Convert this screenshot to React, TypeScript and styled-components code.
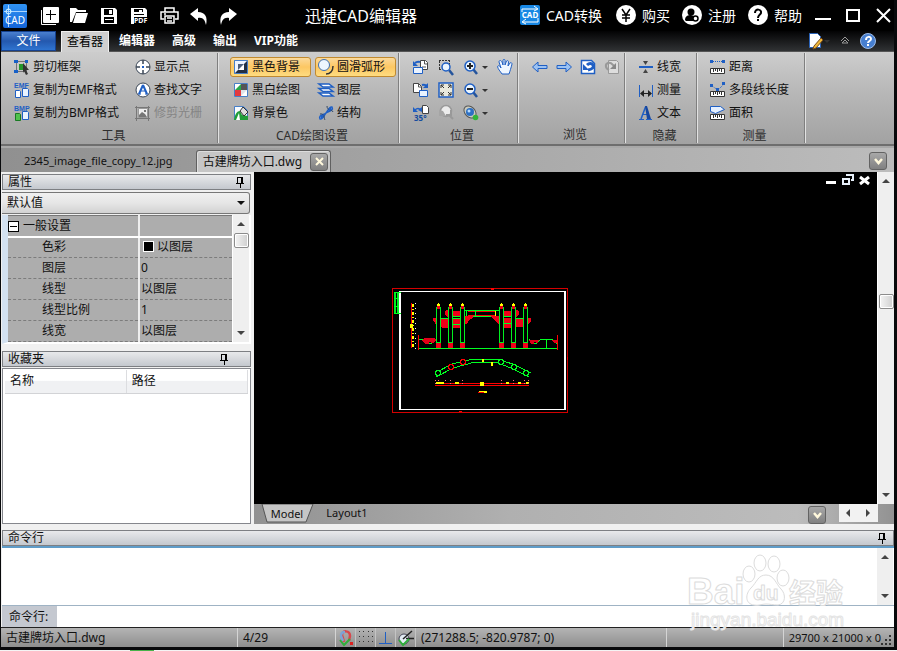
import React from "react";
import styled, { createGlobalStyle } from "styled-components";

const Global = createGlobalStyle`
  * { box-sizing: border-box; }
  body { margin: 0; background: #000; }
  body, button, input, select, textarea, table {
    font-family: "Noto Sans", "Noto Sans CJK SC", sans-serif;
    font-size: 12px;
    line-height: 16px;
    color: #111;
  }
  button { border: 0; padding: 0; background: none; }
`;

/* ---------- icons ---------- */

const B = "#1f5fc4";
const icons: Record<string, React.ReactNode> = {
  cut: (
    <g>
      <path d="M2.500 2.500h10v10h-10z" fill="none" stroke="#222" strokeDasharray="1 1" />
      <path d="M0 1h4v3H0zM11 1h3v3h-3zM0 11h4v3H0z" fill="#1760c8" />
      <path d="M5 5h4v6H5z" fill="#26962c" />
      <path d="M9 4l6 7h-3l2 4-2 1-2-4-1 2z" fill="#333" />
    </g>
  ),
  emf: <Copy label="EMF" color={B} fill="#fff" />,
  bmp: <Copy label="BMP" color={B} fill="#4fc24c" />,
  point: (
    <g fill="none" stroke="#3a4656">
      <circle cx="8" cy="8" r="7" fill="#fff" />
      <path d="M8 1v4M8 11v4M1 8h4M11 8h4" strokeWidth="1.500" />
      <path d="M7 8h2" stroke={B} strokeWidth="2" />
    </g>
  ),
  find: (
    <g>
      <circle cx="8" cy="8" r="7" fill="#fff" stroke="#3a4656" />
      <path d="M8 3l-4 9M8 3l4 9" stroke={B} strokeWidth="2" fill="none" />
      <path d="M5.500 9h5M3 12h3M10 12h3" stroke={B} fill="none" />
    </g>
  ),
  raster: (
    <g fill="none" stroke="#777">
      <path d="M0 2.500h15M0 13.500h15M1.500 1v15M13.500 1v15" />
      <path d="M3.500 3.500h9v9h-9z" fill="#eee" stroke="#999" />
      <path d="M4 12v-2l3-3 3 2 2 3z" fill="#777" stroke="none" />
      <path d="M9 5h2v2H9z" fill="#777" stroke="none" />
    </g>
  ),
  blackbg: (
    <g>
      <path d="M1.500 1.500h13v13h-13z" fill="#222e42" stroke="#477fc8" />
      <path d="M2 2h12L2 14z" fill="#eef4ff" />
      <path d="M5 5h6v6H5z" fill="#fff" />
      <path d="M5 5h6l-6 6z" fill="#4d5f7c" />
    </g>
  ),
  bw: (
    <g>
      <path d="M1.500 1.500h13v13h-13z" fill="#fff" stroke="#477fc8" />
      <path d="M8 2h6v6H8z" fill="#555" />
      <path d="M2 8h6v6H2z" fill="#e33a3f" />
      <path d="M2 8l6-6v6z" fill="#27a84a" />
      <path d="M8 14l6-6H8z" fill="#dfe3e8" />
    </g>
  ),
  bgcolor: (
    <g>
      <path d="M1.500 1.500h9l4 4v9h-13z" fill="#f7fbff" stroke="#477fc8" />
      <path d="M1 15c1-6 3-9 6-9l2 4 6 1v4z" fill="#1f9d38" />
      <path d="M7 6l3-4 5 5-4 4z" fill="#ddd" stroke="#333" />
      <path d="M3 15l3-7 1 7z" fill="#fff" />
    </g>
  ),
  arc: (
    <g fill="none">
      <circle cx="6" cy="6" r="5.500" fill="#eef6ff" stroke="#3d6eb0" />
      <path d="M15 7c0 5-3 8-7 8" stroke="#333" strokeWidth="1.500" />
    </g>
  ),
  layers: (
    <g fill="#fff" stroke={B} strokeWidth="1.500">
      <path d="M1 11h10l4 3H5z" />
      <path d="M1 6.500h10l4 3H5z" />
      <path d="M1 2h10l4 3H5z" />
    </g>
  ),
  structure: (
    <g fill="none" stroke={B}>
      <path d="M2 14c-2-4 4-4 6-6s3-7 6-6c2 4-4 4-6 6s-3 7-6 6z" fill="#cfe2ff" strokeWidth="1.500" />
      <path d="M2 9c5-1 4 5 5 6M9 1c0 5 5 3 6 6" stroke="#314561" />
      <path d="M3 13l2-3M11 6l2-3" strokeWidth="2" />
    </g>
  ),
  pageA: (
    <g>
      <path d="M7.500 1.500h5l2 2v7h-7z" fill="#fff" stroke="#444" />
      <path d="M11.500 2v3h3M9 8h4" stroke="#555" fill="none" />
      <path d="M.5 8.500h9v6h-9z" fill="#eaf3ff" stroke={B} />
      <path d="M7 3c-3-1-4 0-5 1" stroke={B} strokeWidth="2" fill="none" />
      <path d="M0 2v5h5z" fill={B} />
    </g>
  ),
  pageB: (
    <g>
      <path d="M.5 1.500h5l3 3v6h-8z" fill="#fff" stroke="#444" />
      <path d="M5.500 1v4h3" stroke="#555" fill="none" />
      <path d="M6.500 8.500h8v6h-8z" fill="#eaf3ff" stroke={B} />
      <path d="M9 3c3-1 4 0 5 1" stroke={B} strokeWidth="2" fill="none" />
      <path d="M15 1v5h-5z" fill={B} />
    </g>
  ),
  rotate35: (
    <g>
      <path d="M9.500 .5h4l2 2v6h-6z" fill="#fff" stroke="#444" />
      <path d="M8 5c-2-2-4-2-6 0" stroke={B} strokeWidth="1.500" fill="none" />
      <path d="M0 2v5h5zM9 2v5L5 5z" fill={B} />
      <text x="1" y="16" fontSize="8" fontWeight="700" fill="#164c9e">35°</text>
    </g>
  ),
  zoomwin: (
    <g fill="none">
      <path d="M1 1.500h10M1.500 2v9M1 10.500h6M11.500 1v5" stroke="#333" strokeDasharray="2 1" />
      <Lens cx={8} cy={8} />
    </g>
  ),
  extents: (
    <g fill="none" stroke="#333">
      <path d="M1 1h14v14H1z" fill="#e9e9dc" stroke={B} strokeWidth="1.500" />
      <path d="M6 6L3 3m0 3V3h3M10 6l3-3m-3 0h3v3M6 10l-3 3m0-3v3h3M10 10l3 3m-3 0h3v-3" />
    </g>
  ),
  zoomprev: (
    <g fill="none" stroke="#999" strokeWidth="1.500">
      <circle cx="8" cy="6" r="5.500" fill="#ececec" />
      <path d="M11 10l4 4M13 5v5h-5" strokeWidth="2" />
      <path d="M1 5l4 1 3 5H1z" fill="#a5a5a5" stroke="none" />
    </g>
  ),
  zoomin: (
    <g>
      <Lens cx={7} cy={7} r={5} />
      <path d="M4 7h6M7 4v6" stroke="#222" strokeWidth="2" />
    </g>
  ),
  zoomout: (
    <g>
      <Lens cx={7} cy={7} r={5} />
      <path d="M4 7h6" stroke="#222" strokeWidth="2" />
    </g>
  ),
  orbit: (
    <g fill="none">
      <ellipse cx="7" cy="7" rx="7" ry="5" transform="rotate(45 7 7)" fill="#c9cbbf" stroke="#555" />
      <circle cx="7" cy="7" r="4" fill="#2c6fc4" />
      <circle cx="6" cy="6" r="1.500" fill="#b9dcff" />
      <circle cx="12.500" cy="12.500" r="2.800" fill="#32b53a" />
    </g>
  ),
  hand: (
    <path
      d="M5 15C3 12 1 10 .5 7.500 1 6 3 7 4 9L2 3c0-2 2-2 3 0l1 3V1.500c0-1.500 2-1.500 2 0V6l1.500-4c1-1 2 0 2 1L11 7l2-3c1-1 2 0 2 1-1 4-2 7-3 10z"
      fill="#eef6ff" stroke={B}
    />
  ),
  left: <path d="M.5 8L6 3v3.500h9v3H6V13z" fill="#9cc2f2" stroke={B} />,
  right: <path d="M15.500 8L10 3v3.500H1v3h9V13z" fill="#9cc2f2" stroke={B} />,
  reload: (
    <g>
      <path d="M1.500 1.500h10l3 3v10h-13z" fill="#fff" stroke={B} strokeWidth="1.500" />
      <path d="M8 11c5-1 6-3 5-5-1-2-4-2-6 0" stroke={B} strokeWidth="3" fill="none" />
      <path d="M3 5v6h6z" fill={B} />
    </g>
  ),
  reloadOff: (
    <g>
      <path d="M4.500 1.500h8l2 2v11h-10z" fill="#ddd" stroke="#999" />
      <path d="M5 11C1 9 1 5 4 4s4 1 6 3" stroke="#999" strokeWidth="2" fill="none" />
      <path d="M12 4v6H6z" fill="#888" />
    </g>
  ),
  lwidth: (
    <g>
      <path d="M1 7h14v2H1z" fill={B} />
      <path d="M5 2h5L7.500 6zM5 14h5l-2.500-4z" fill="#444" />
    </g>
  ),
  measure: (
    <g>
      <path d="M1.500 3v12M14.500 3v12" stroke={B} />
      <path d="M3 11.500h10" stroke="#222" />
      <path d="M6 8v7l-4-3.500zM10 8v7l4-3.500z" fill="#222" />
    </g>
  ),
  text: (
    <g>
      <path d="M7.500 2L3 14" stroke={B} strokeWidth="1.500" />
      <path d="M5 9.500h6M1 14.500h5M8 14.500h6" stroke={B} />
      <path d="M7 1l2 0 4 13h-4z" fill="#1647a0" />
    </g>
  ),
  dist: (
    <g>
      <path d="M3 2.500h10" stroke={B} strokeDasharray="1 1" />
      <path d="M0 1h3v3H0zM12 1h3v3h-3z" fill={B} />
      <Ruler />
    </g>
  ),
  poly: (
    <g>
      <path d="M2 4l6 4 6-6" stroke={B} strokeDasharray="1 1" fill="none" />
      <path d="M0 2h3v3H0zM12 0h3v3h-3zM6 6h3v3H6z" fill={B} />
      <Ruler />
    </g>
  ),
  area: (
    <g>
      <path d="M.5 1.500h10l4 3-9 4-5-2z" fill="#e5f0ff" stroke={B} />
      <Ruler />
    </g>
  ),
  magnet: (
    <g fill="none">
      <path d="M11 11l1-5c0-6-8-6-8-1l2 7" stroke="#d9474c" strokeWidth="2.500" />
      <path d="M5 11L3 6c0-3 2-4 4-4" stroke="#7ca4d6" strokeWidth="2.500" />
      <path d="M2 10l4 5 6-6" stroke="#2fae3b" strokeWidth="2" />
      <path d="M12 12h3v3h-3z" fill="#d22" />
    </g>
  ),
  dots: <path d="M1.500 1v15M5.500 1v15M10.500 1v15M14.500 1v15" stroke="#333" strokeDasharray="1 4" fill="none" />,
  ortho: <path d="M1 13.500h13M7.500 2v11" stroke={B} fill="none" />,
  snap: (
    <g fill="none">
      <circle cx="6" cy="9" r="5" fill="#e3ecf4" stroke="#445" />
      <path d="M5 9l9-8M8 8.500h8" stroke="#222" strokeWidth="1.500" />
      <path d="M1 10l4 5 6-6" stroke="#2fae3b" strokeWidth="2" />
    </g>
  ),
  note: (
    <g>
      <path d="M1.500 .5h8l3 3v11h-11z" fill="#fff" stroke="#2b63b8" />
      <path d="M6 13l7-8 2 2-7 8-3 1z" fill="#f0b83a" stroke="#7b4d17" />
    </g>
  ),
  pin: <path d="M5 3.500h6M5.500 3v6M9.500 3v6M10.500 3v6M4 9.500h8M8.500 9v5" stroke="#000" fill="none" />,
};

function Copy({ label, color, fill }: { label: string; color: string; fill: string }) {
  return (
    <g>
      <text x="0" y="6" fontSize="7" fontWeight="700" fill={color} fontFamily="Liberation Sans, sans-serif">{label}</text>
      <path d="M8.500 6.500h5l1 1v7h-6z" fill="#eaf3ff" stroke={color} />
      <path d="M1.500 8.500h4l1 1v6h-5z" fill={fill} stroke={fill === "#fff" ? color : "#187a23"} />
    </g>
  );
}
function Lens({ cx, cy, r = 4 }: { cx: number; cy: number; r?: number }) {
  return (
    <g>
      <path d={`M${cx + 3} ${cy + 3}l4 5`} stroke="#24549c" strokeWidth="2.500" />
      <circle cx={cx} cy={cy} r={r} fill="#eaf5ff" stroke={B} strokeWidth="1.500" />
    </g>
  );
}
function Ruler() {
  return (
    <g>
      <path d="M.5 9.500h14v5H.5z" fill="#fff" stroke="#333" />
      <path d="M3.500 10v3M5.500 10v2M7.500 10v3M9.500 10v2M11.500 10v3" stroke="#333" />
    </g>
  );
}

const Svg = styled.svg<{ $s?: number }>`
  width: ${(p) => p.$s ?? 16}px;
  height: ${(p) => p.$s ?? 16}px;
  flex: none;
  display: block;
  overflow: visible;
`;
const Icon = ({ n }: { n: string }) => <Svg viewBox="0 0 16 16" aria-hidden="true">{icons[n]}</Svg>;

/* ---------- window ---------- */

const Page = styled.div`
  min-height: 100vh;
  display: flex;
  flex-direction: column;
  background: #f4f4f4;
`;
const Frame = styled.div`
  position: relative;
  flex: 1;
  display: flex;
  flex-direction: column;
  background: #08090b;
  padding: 0 3px 3px 1px;
`;
const Below = styled.div`
  height: 1px;
  padding-left: 130px;
  &::before { content: ""; display: block; width: 24px; height: 1px; background: #48b24a; }
`;
const TitleBar = styled.header`
  height: 31px;
  display: flex;
  align-items: center;
  background: #000;
`;
const Quick = styled.nav`
  display: flex;
  padding-left: 5px;
`;
const QuickButton = styled.button`
  width: 30px;
  height: 30px;
  display: grid;
  place-items: center;
`;
const Title = styled.h1`
  margin: 0 auto 0 61px;
  font-size: 16px;
  line-height: 24px;
  font-weight: 400;
  color: #fff;
  white-space: nowrap;
`;
const Links = styled.nav`
  display: flex;
  gap: 12px;
`;
const TopLink = styled.a`
  display: flex;
  align-items: center;
  gap: 5px;
  color: #fff;
  font-size: 14px;
  line-height: 20px;
  text-decoration: none;
  white-space: nowrap;
  &:first-child { margin-right: 2px; }
`;
const WinButtons = styled.div`
  display: flex;
  gap: 8px;
  padding-left: 10px;
`;
const WinButton = styled.button`
  width: 22px;
  height: 30px;
  display: grid;
  place-items: center;
`;

const MenuBar = styled.nav`
  height: 21px;
  display: flex;
  align-items: stretch;
  background: linear-gradient(#030304, #303234);
  border-bottom: 1px solid #555;
`;
const MenuTab = styled.button<{ $kind?: "file" | "on" }>`
  height: 20px;
  padding: 0 7px;
  margin-right: 3px;
  font-weight: 700;
  color: #fff;
  white-space: nowrap;
  ${(p) => p.$kind === "file" && `
    width: 55px; font-weight: 400; border: 1px solid #15418f; margin-right: 5px;
    background: linear-gradient(#4a80cf, #2458ae 50%, #2f74d0);`}
  ${(p) => p.$kind === "on" && `
    height: 21px; padding: 0 5px; color: #000; font-weight: 400;
    background: #cfcfcf; border: 1px solid #efefef; border-bottom: 0;`}
`;
const MenuRight = styled.div`
  margin-left: auto;
  padding-right: 18px;
  display: flex;
  align-items: center;
  gap: 8px;
`;
const Bare = styled.button`
  display: flex;
  align-items: center;
`;

const Ribbon = styled.section`
  display: flex;
  height: 94px;
  padding: 1px 0 1px 1px;
  background: linear-gradient(#cdcdcd, #b9b9b9 40%, #a2a2a2);
  border-bottom: 2px solid #6e6e6e;
`;
const Group = styled.fieldset<{ $w: number }>`
  flex: none;
  width: ${(p) => p.$w}px;
  min-width: 0;
  margin: 0;
  padding: 4px 0 0;
  border: 0;
  border-right: 1px solid #7f7f7f;
  box-shadow: 1px 0 0 #e2e2e2;
  display: flex;
  flex-direction: column;
`;
const Cols = styled.div<{ $pad: number; $gap: number }>`
  display: flex;
  height: 66px;
  padding-left: ${(p) => p.$pad}px;
  gap: ${(p) => p.$gap}px;
`;
const Col = styled.div`
  display: flex;
  flex-direction: column;
  align-items: flex-start;
  gap: 3px;
`;
const Tool = styled.button<{ $on?: boolean; $w?: number }>`
  display: flex;
  align-items: center;
  gap: 3px;
  height: 20px;
  ${(p) => p.$w && `width: ${p.$w}px;`}
  padding: 0 2px;
  border: 1px solid ${(p) => (p.$on ? "#c08a30" : "transparent")};
  border-radius: 3px;
  background: ${(p) => (p.$on ? "linear-gradient(#fbd99a, #fcc763 50%, #fedc80)" : "none")};
  white-space: nowrap;
  &:disabled { color: #858585; }
`;
const GroupName = styled.div`
  margin-top: 5px;
  padding-left: 8px;
  text-align: center;
  color: #2e2e2e;
`;
const Caret = styled.span`
  flex: none;
  border: 3px solid transparent;
  border-top-color: #333;
  border-bottom: 0;
`;

/* ---------- document area ---------- */

const DocTabs = styled.div`
  height: 26px;
  display: flex;
  align-items: flex-end;
  padding: 0 7px 0 1px;
  background: linear-gradient(90deg, #909090, #bcbcbc);
  border-top: 2px solid #a8a8a8;
`;
const DocTab = styled.button<{ $on?: boolean }>`
  height: 22px;
  display: flex;
  align-items: center;
  gap: 8px;
  padding: ${(p) => (p.$on ? "0 2px 0 6px" : "0 23px 0 22px")};
  font-size: ${(p) => (p.$on ? 12 : 11)}px;
  white-space: nowrap;
  ${(p) => p.$on && "background: #c6c6c6; border: 1px solid #606060; border-bottom: 0; border-radius: 3px 3px 0 0; box-shadow: inset 1px 1px 0 #ddd;"}
`;
const SmallBox = styled.span`
  width: 18px;
  height: 18px;
  display: grid;
  place-items: center;
  background: linear-gradient(#a8a8a8, #808080);
  border: 1px solid #636363;
  border-radius: 3px;
`;
const PushRight = styled.button`
  margin: 0 0 2px auto;
`;
const Main = styled.main`
  flex: 1;
  display: flex;
  gap: 3px;
  background: #f0f0f0;
`;
const Side = styled.aside`
  width: 250px;
  flex: none;
  display: flex;
  flex-direction: column;
  padding: 2px 0 0 1px;
`;
const PanelTitle = styled.h2<{ $end?: number }>`
  margin: 0;
  height: 16px;
  flex: none;
  display: flex;
  align-items: center;
  justify-content: space-between;
  padding: 0 ${(p) => p.$end ?? 2}px 0 5px;
  font-size: 12px;
  line-height: 14px;
  font-weight: 400;
  border: 1px solid #7d7f83;
  background: linear-gradient(#e8e9eb, #c4c8ce);
`;
const Picker = styled.select`
  height: 22px;
  margin: 2px 1px 1px 0;
  padding: 0 6px 0 5px;
  appearance: none;
  border: 1px solid #777;
  border-left: 0;
  border-radius: 0 3px 3px 0;
  background: linear-gradient(#f0f0f0, #e6e6e6 50%, #d2d2d2);
`;
const PickerWrap = styled.label`
  position: relative;
  display: grid;
  &::after {
    content: "";
    position: absolute;
    right: 6px;
    top: 11px;
    border: 4px solid transparent;
    border-top-color: #111;
    border-bottom: 0;
  }
`;
const PropBox = styled.div`
  display: flex;
  border-left: 6px solid #d3e1f0;
  border-bottom: 2px solid #fff;
  border-right: 2px solid #fff;
`;
const Props = styled.table`
  flex: 1;
  border-collapse: collapse;
  table-layout: fixed;
  background: #adadad;
  border-top: 1px solid #777;
  td, th {
    height: 21px;
    padding: 0 0 0 1px;
    font-weight: 400;
    text-align: left;
    border-bottom: 1px dashed #7c7c7c;
  }
  th { width: 131px; padding-left: 34px; border-right: 2px solid #eee; }
  tr:first-child > * { border-bottom: 2px solid #fff; padding-left: 0; }
`;
const Expand = styled.button`
  width: 11px;
  height: 11px;
  margin: 0 4px 0 0;
  vertical-align: -1px;
  border: 1px solid #000;
  background: linear-gradient(#000, #000) center / 7px 1px no-repeat #fff;
`;
const Swatch = styled.span`
  display: inline-block;
  width: 11px;
  height: 11px;
  margin: 0 3px 0 2px;
  vertical-align: -1px;
  background: #000;
  border: 1px solid #fff;
`;
const Scroll = styled.div<{ $w: number }>`
  flex: none;
  width: ${(p) => p.$w}px;
  display: flex;
  flex-direction: column;
  align-items: center;
  justify-content: space-between;
  padding: 5px 0;
  background: #efefef;
  border-left: 1px solid #fff;
`;
const Arrow = styled.button<{ $d: "up" | "down" | "left" | "right" }>`
  width: 8px;
  height: 8px;
  background: #444;
  clip-path: ${(p) =>
    ({
      up: "polygon(50% 25%, 100% 75%, 0 75%)",
      down: "polygon(0 25%, 100% 25%, 50% 75%)",
      left: "polygon(25% 50%, 75% 0, 75% 100%)",
      right: "polygon(75% 50%, 25% 0, 25% 100%)",
    })[p.$d]};
`;
const Thumb = styled.div`
  width: 15px;
  height: 15px;
  border: 1px solid #8c8c8c;
  border-radius: 2px;
  background: linear-gradient(90deg, #f4f4f4, #cfcfcf);
  box-shadow: inset 0 0 0 1px #fff;
`;
const Fill = styled.div<{ $n: number }>`
  flex: ${(p) => p.$n} 1 0;
`;
const Favs = styled.section`
  flex: 1;
  margin-top: 1px;
  padding: 1px 2px;
  background: #fff;
  border: 1px solid #85878d;
`;
const FavTable = styled.table`
  width: 100%;
  border-collapse: collapse;
  table-layout: fixed;
  th {
    height: 23px;
    padding: 0 0 0 5px;
    text-align: left;
    font-weight: 400;
    border-right: 1px solid #dcdde0;
    border-bottom: 1px solid #d2d3d6;
    background: linear-gradient(#fff 45%, #f0f1f3 50%);
  }
`;
const Work = styled.section`
  flex: 1;
  display: flex;
  flex-direction: column;
`;
const View = styled.div`
  flex: 1;
  display: flex;
`;
const Canvas = styled.div`
  flex: 1;
  display: flex;
  justify-content: space-between;
  align-items: flex-start;
  background: #000;
`;
const Sheet = styled.svg`
  width: 176px;
  height: 125px;
  margin: 116px 0 0 138px;
  display: block;
`;
const ChildButtons = styled.div`
  display: flex;
  gap: 2px;
  padding: 0 5px;
`;
const Bottom = styled.div`
  height: 20px;
  display: flex;
  background: linear-gradient(90deg, #919191, #b0b0b0 40%, #bcbcbc 85%, #929292);
`;
const ModelTab = styled.button`
  position: relative;
  width: 58px;
  height: 19px;
  margin-left: 4px;
  font-size: 11px;
`;
const TabShape = styled.svg`
  position: absolute;
  inset: 0;
  width: 58px;
  height: 19px;
`;
const TabText = styled.span`
  position: relative;
`;
const Layout = styled.button`
  margin-left: 9px;
  height: 17px;
  width: 44px;
  font-size: 11px;
`;
const DropTab = styled.button`
  margin: 2px 13px 0 auto;
`;
const HScroll = styled.div`
  width: 39px;
  height: 18px;
  margin-right: 16px;
  padding: 0 6px 0 5px;
  display: flex;
  align-items: center;
  justify-content: space-between;
  background: #f2f2f2;
`;

/* ---------- command line and status ---------- */

const Command = styled.section`
  padding: 6px 0 0 1px;
  background: #f0f0f0;
`;
const LogRow = styled.div`
  display: flex;
  height: 60px;
  padding-right: 1px;
  background: #fff;
  border-top: 2px solid #5f9cc8;
  border-bottom: 1px solid #9fb3c4;
`;
const Log = styled.textarea`
  flex: 1;
  border: 0;
  resize: none;
  outline: 0;
  background: #fff;
`;
const Prompt = styled.div`
  display: flex;
  height: 21px;
  background: #fff;
  label { width: 55px; padding: 3px 0 0 7px; background: #c4c8d0; white-space: nowrap; }
  input { flex: 1; min-width: 0; border: 0; outline: 0; background: #fff; }
`;
const Status = styled.footer`
  height: 20px;
  display: flex;
  align-items: center;
  border-top: 1px solid #222;
  background: linear-gradient(#b4b4b4, #8e8e8e);
`;
const Cell = styled.div<{ $w?: number }>`
  height: 19px;
  ${(p) => (p.$w ? `width: ${p.$w}px; flex: none;` : "flex: 1;")}
  display: flex;
  align-items: center;
  padding-left: 5px;
  border-right: 1px solid #d4d4d4;
  white-space: nowrap;
`;
const IconCell = styled.button`
  width: 20px;
  height: 19px;
  display: grid;
  place-items: center;
  border-right: 1px solid #c4c4c4;
`;
const SizeCell = styled.div`
  padding-left: 5px;
  font-size: 11px;
  white-space: nowrap;
`;
const FavTitle = styled(PanelTitle)`
  margin-top: 7px;
`;
const Grip = styled.svg`
  width: 11px;
  height: 11px;
  margin: 5px 2px 0 0;
`;
const Mark = styled.svg`
  position: absolute;
  right: 45px;
  bottom: 17px;
  width: 166px;
  height: 80px;
  pointer-events: none;
`;

const T = ({ n, t, on, w, off }: { n: string; t?: string; on?: boolean; w?: number; off?: boolean }) => (
  <Tool $on={on} $w={w} disabled={off} aria-label={t ?? n}>
    <Icon n={n} />
    {t}
  </Tool>
);
const Chevron = () => (
  <SmallBox>
    <Svg $s={9} viewBox="0 0 9 9"><path d="M1 2l3.500 4L8 2" fill="none" stroke="#fff8dc" strokeWidth="2.500" /></Svg>
  </SmallBox>
);

const quick: [string, React.ReactNode][] = [
  ["新建", <g key="n"><rect x="3" y="0" width="16" height="16" rx="1" fill="#fff" /><path d="M1.500 3v14.500H16" stroke="#fff" fill="none" /><path d="M6 7.500h10M10.500 3v10" stroke="#000" /></g>],
  ["打开", <path key="o" d="M0 3V1h6l2 2h8v2H6L2 15H0zM6 6h12l-3 10H3z" fill="#fff" />],
  ["保存", <g key="s"><path d="M1 1h14l2 2v14H1z" fill="#fff" /><path d="M4 2h9v6H4zM4 10h10v6H4z" fill="#000" /><path d="M9 3h3v4H9zM5 12h8v1H5z" fill="#fff" /></g>],
  ["PDF", <g key="p"><path d="M1 1h14l2 2v14H1z" fill="#fff" /><path d="M4 2h9v3H4zM4 7h10v1H4z" fill="#000" /><path d="M4 10h14v7H4z" fill="#000" /><path d="M9 3h3v2H9z" fill="#fff" /><text x="4" y="16" fontSize="7" fontWeight="700" fill="#fff">PDF</text></g>],
  ["打印", <g key="r" fill="none" stroke="#fff" strokeWidth="1.500"><path d="M5 5V1h9v4M4 12H1V5h17v7h-3" /><path d="M5 9h9v7H5zM4 7h2M7 11h5M7 14h5" /></g>],
  ["撤销", <path key="u" d="M0 7l8-6v4c7 0 10 5 8 13-1-5-3-8-8-7v3z" fill="#fff" />],
  ["重做", <path key="d" d="M17 7L9 1v4C2 5-1 10 1 18c1-5 3-8 8-7v3z" fill="#fff" />],
];

const Drawing = () => {
  const legs = [56, 68, 80, 119, 131, 143];
  const rings: [number, number, string][] = [
    [58, 93, "#0f2"], [71, 87, "#f00"], [83, 82, "#f00"], [121, 82, "#0f2"], [134, 87, "#0f2"], [146, 93, "#0f2"],
  ];
  return (
    <Sheet viewBox="12 8 176 125" shapeRendering="crispEdges" aria-label="drawing">
      <path d="M12.500 8.500h175v124h-175z" fill="none" stroke="#d40000" />
      <path d="M20 11v119M185 11v119" stroke="#fff" strokeWidth="2" />
      <path d="M19 11.500h166M19 129.500h166" stroke="#fff" />
      <path d="M14 12h2v21h-2zM17 12h2v21h-2z" fill="#00ee20" />
      <path d="M14 12.500h7M14 18.500h5M14 26.500h5M14 33.500h7" stroke="#00ff20" />
      <path d="M31.500 23v45" stroke="#f00" />
      <path d="M33 24v44" stroke="#ff0" strokeWidth="2" strokeDasharray="3 2 1 2" />
      <path d="M35.500 23v46" stroke="#fff" strokeDasharray="1 4" />
      <path d="M30 44h3v4h-3z" fill="#ff0" />
      {/* bracketed beams */}
      <path d="M65 31l2-1h6v7h-6l-2-3zM73 31h9v6h-9zM60 39h10v9h-8l-2-2zM72 38h12v10H72zM53 38h5v8h-1l-4-6z" fill="#f00018" />
      <path d="M139 31l-2-1h-5v7h5l2-3zM122 31h10v6h-10zM122 38h10v10h-10zM135 39h9v8h-9zM151 38h-4v8l4-5z" fill="#f00018" />
      <path d="M84 36h10l-3 3-2 1-2 4h-3zM109 36h10v8l-4-3-3-4z" fill="#f00018" />
      <path d="M60 38.500h24M72 44.500h12M84 30.500h35M93 36.500h18M119 43.500h12M135 38.500h12M73 36.500h9M122 36.500h9" stroke="#0f2" />
      <path d="M88 31.500h28M88 35.500h28" stroke="#f00" />
      <path d="M87.500 31v5M96.500 31v5" stroke="#0f2" transform="translate(-1 0)" />
      <path d="M115.500 31v5M60.500 40v4M82.500 38v5M122.500 40v5" stroke="#ff0" />
      {legs.map((x) => (
        <g key={x}>
          <path d={`M${x + 1} 29h3v33h-3z`} fill="#000" />
          <path d={`M${x} 27h1v41h-1zM${x + 4} 27h1v41h-1z`} fill="#00f020" />
          <path d={`M${x} 62h5v1h-5zM${x} 28h5v1h-5z`} fill="#00f020" />
          <path d={`M${x} 63h5v5h-5zM${x + 1} 26h3v3h-3z`} fill="#f00018" />
          <path d={`M${x + 1} 24h1v-1h1v1h1v2h-3z`} fill="#ff0" />
        </g>
      ))}
      <path d="M39 68.500h139" stroke="#0f2" />
      <path d="M38.500 55v15M177.500 55v15" stroke="#f00" />
      <path d="M39 59h4l2 4h7l4-4M149 59l3 4h5l4-4h11l5 5M166.500 59v9" stroke="#0f2" fill="none" />
      <path d="M42 60l3-2h10l1 2-3 3h-2l-1-2-1 3h-4zM149 60h10l-2 4-2-3-1 3h-3l-1-2zM172 60h5v3h-3z" fill="#e00018" />
      {/* curved plan */}
      <path d="M55 93l17-9 21-5h22l18 5 18 9M56 97l17-9 22-6h20l16 6 18 9" stroke="#0f2" fill="none" />
      {rings.map(([x, y, c]) => (
        <circle key={x} cx={x} cy={y} r="2.500" fill="#000" stroke={c} strokeWidth="1.500" />
      ))}
      <path d="M102 79h2v3h-2zM111 82h2v4h-2z" fill="#ff0" />
      <path d="M55 103.500h94M55 105.500h94" stroke="#f00" />
      <path d="M56 103h8M75 103h4M126 103h3M138 103h3M146 103h3" stroke="#ff0" strokeWidth="2" />
      <path d="M100 102h4v4h-4z" fill="#ff0" />
      <path d="M55.500 100v5M58.500 100v3M65.500 100v3M70.500 100v4M82.500 100v4M121.500 100v4M133.500 100v4M144.500 100v4M148.500 100v5" stroke="#f77" strokeDasharray="1 2" />
      <path d="M99 111.500h8" stroke="#ff0" />
      <path d="M98 112.500h6" stroke="#f00" />
      <path d="M104 112.500h3" stroke="#ff0" />
      <path d="M111 8h3v2h-3zM79 131h3v1h-3zM187 77h1v3h-1z" fill="#f00" />
    </Sheet>
  );
};

const rows: [string, string][] = [
  ["图层", "0"],
  ["线型", "以图层"],
  ["线型比例", "1"],
  ["线宽", "以图层"],
];

export default function App() {
  return (
    <Page>
      <Global />
      <Frame>
        <TitleBar>
          <Svg $s={28} viewBox="0 0 28 28" aria-label="CAD">
            <defs><linearGradient id="lg" x2="0" y2="1"><stop stopColor="#2f93f4" /><stop offset="1" stopColor="#1565d8" /></linearGradient></defs>
            <rect x="2" y="2" width="24" height="24" rx="2" fill="url(#lg)" />
            <path d="M7.500 3v22M3 9.500h23" stroke="#a9d4ff" />
            <circle cx="7.500" cy="9.500" r="2.500" fill="none" stroke="#dff" />
            <text x="14" y="22" textAnchor="middle" fontSize="10" fill="#fff">CAD</text>
          </Svg>
          <Quick>
            {quick.map(([name, art]) => (
              <QuickButton key={name} aria-label={name}><Svg $s={18} viewBox="0 0 18 18">{art}</Svg></QuickButton>
            ))}
          </Quick>
          <Title>迅捷CAD编辑器</Title>
          <Links>
            <TopLink href="#convert">
              <Svg $s={21} viewBox="0 0 21 21">
                <rect width="20" height="20" x="0" y="0" rx="2" fill="#1787e4" />
                <path d="M2 7V4h15M14 1l4 3-4 2M18 13v4H3M6 14l-4 3 4 2" stroke="#fff" fill="none" />
                <text x="10" y="13" textAnchor="middle" fontSize="8" fontWeight="700" fill="#fff">CAD</text>
              </Svg>
              CAD转换
            </TopLink>
            <TopLink href="#buy">
              <Svg $s={21} viewBox="0 0 21 21"><circle cx="10" cy="10" r="10" fill="#fff" /><path d="M6 4l4 6 4-6M10 10v7M6 10h8M6 13h8" stroke="#000" strokeWidth="1.500" fill="none" /></Svg>
              购买
            </TopLink>
            <TopLink href="#register">
              <Svg $s={21} viewBox="0 0 21 21"><circle cx="10" cy="10" r="10" fill="#fff" /><circle cx="9" cy="7" r="3.500" /><path d="M3 15c0-4 3-5 6-5l3 1-1 5H4z" /><circle cx="13.500" cy="13.500" r="2.500" fill="#fff" stroke="#000" strokeWidth="1.500" /></Svg>
              注册
            </TopLink>
            <TopLink href="#help">
              <Svg $s={21} viewBox="0 0 21 21"><circle cx="10" cy="10" r="10" fill="#fff" /><path d="M7 8c0-5 7-4 6 0-1 2-3 2-3 5M10 14v2" stroke="#000" strokeWidth="2" fill="none" /></Svg>
              帮助
            </TopLink>
          </Links>
          <WinButtons>
            <WinButton aria-label="最小化"><Svg $s={16} viewBox="0 0 16 16"><path d="M0 11h16" stroke="#fff" strokeWidth="2" /></Svg></WinButton>
            <WinButton aria-label="最大化"><Svg $s={16} viewBox="0 0 16 16"><path d="M2 2h12v11H2z" fill="none" stroke="#fff" strokeWidth="2" /></Svg></WinButton>
            <WinButton aria-label="关闭"><Svg $s={16} viewBox="0 0 16 16"><path d="M2 1l13 13M15 1L2 14" stroke="#fff" strokeWidth="2" /></Svg></WinButton>
          </WinButtons>
        </TitleBar>

        <MenuBar>
          <MenuTab $kind="file">文件</MenuTab>
          <MenuTab $kind="on">查看器</MenuTab>
          <MenuTab>编辑器</MenuTab>
          <MenuTab>高级</MenuTab>
          <MenuTab>输出</MenuTab>
          <MenuTab>VIP功能</MenuTab>
          <MenuRight>
            <Bare aria-label="样式"><Icon n="note" /><Caret /></Bare>
            <Bare aria-label="收起"><Svg $s={14} viewBox="0 0 14 14"><path d="M3 7l4-4 4 4M4 9l3-3 3 3z" fill="none" stroke="#999" /></Svg></Bare>
            <Bare aria-label="帮助"><Svg $s={16} viewBox="0 0 16 16"><circle cx="8" cy="8" r="7.500" fill="#477fd0" stroke="#9dbce8" /><path d="M6 7c0-4 5-4 5-1 0 2-3 2-3 4M8 11v2" stroke="#fff" strokeWidth="2" fill="none" /></Svg></Bare>
          </MenuRight>
        </MenuBar>

        <Ribbon>
          <Group $w={216}>
            <Cols $pad={9} $gap={10}>
              <Col><T n="cut" t="剪切框架" /><T n="emf" t="复制为EMF格式" /><T n="bmp" t="复制为BMP格式" /></Col>
              <Col><T n="point" t="显示点" /><T n="find" t="查找文字" /><T n="raster" t="修剪光栅" off /></Col>
            </Cols>
            <GroupName>工具</GroupName>
          </Group>
          <Group $w={181}>
            <Cols $pad={12} $gap={4}>
              <Col><T n="blackbg" t="黑色背景" on w={81} /><T n="bw" t="黑白绘图" /><T n="bgcolor" t="背景色" /></Col>
              <Col><T n="arc" t="圆滑弧形" on w={81} /><T n="layers" t="图层" /><T n="structure" t="结构" /></Col>
            </Cols>
            <GroupName>CAD绘图设置</GroupName>
          </Group>
          <Group $w={119}>
            <Cols $pad={11} $gap={3}>
              <Col><T n="pageA" /><T n="pageB" /><T n="rotate35" /></Col>
              <Col><T n="zoomwin" /><T n="extents" /><T n="zoomprev" off /></Col>
              <Col>
                {["zoomin", "zoomout", "orbit"].map((n) => (
                  <Tool key={n} aria-label={n} $w={31}><Icon n={n} /><Caret /></Tool>
                ))}
              </Col>
              <Col><T n="hand" /></Col>
            </Cols>
            <GroupName>位置</GroupName>
          </Group>
          <Group $w={107}>
            <Cols $pad={11} $gap={2}>
              <T n="left" />
              <T n="right" />
              <T n="reload" />
              <T n="reloadOff" off />
            </Cols>
            <GroupName>浏览</GroupName>
          </Group>
          <Group $w={72}>
            <Cols $pad={10} $gap={0}><Col><T n="lwidth" t="线宽" /><T n="measure" t="测量" /><T n="text" t="文本" /></Col></Cols>
            <GroupName>隐藏</GroupName>
          </Group>
          <Group $w={108}>
            <Cols $pad={10} $gap={0}><Col><T n="dist" t="距离" /><T n="poly" t="多段线长度" /><T n="area" t="面积" /></Col></Cols>
            <GroupName>测量</GroupName>
          </Group>
        </Ribbon>

        <DocTabs>
          <DocTab>2345_image_file_copy_12.jpg</DocTab>
          <DocTab $on>
            古建牌坊入口.dwg
            <SmallBox><Svg $s={9} viewBox="0 0 9 9"><path d="M1 1l7 7M8 1L1 8" stroke="#fff8dc" strokeWidth="2" /></Svg></SmallBox>
          </DocTab>
          <PushRight aria-label="标签列表"><Chevron /></PushRight>
        </DocTabs>

        <Main>
          <Side>
            <PanelTitle>属性<Icon n="pin" /></PanelTitle>
            <PickerWrap><Picker aria-label="属性"><option>默认值</option></Picker></PickerWrap>
            <PropBox>
              <Props>
                <tbody>
                  <tr><th><Expand aria-label="折叠" />一般设置</th><td /></tr>
                  <tr><th>色彩</th><td><Swatch />以图层</td></tr>
                  {rows.map(([k, v]) => <tr key={k}><th>{k}</th><td>{v}</td></tr>)}
                </tbody>
              </Props>
              <Scroll $w={17}>
                <Arrow $d="up" aria-label="向上" /><Fill $n={5} /><Thumb /><Fill $n={86} /><Arrow $d="down" aria-label="向下" />
              </Scroll>
            </PropBox>
            <FavTitle $end={18}>收藏夹<Icon n="pin" /></FavTitle>
            <Favs>
              <FavTable><thead><tr><th>名称</th><th>路径</th></tr></thead></FavTable>
            </Favs>
          </Side>
          <Work>
            <View>
              <Canvas>
                <Drawing />
                <ChildButtons>
                  <Bare aria-label="最小化"><Svg $s={14} viewBox="0 0 14 14"><path d="M2 8h10v3H2z" fill="#fff" /></Svg></Bare>
                  <Bare aria-label="还原"><Svg viewBox="0 0 16 16"><path d="M7 4V3h6v5h-2M3 7h6v5H3z" fill="none" stroke="#e8f0fa" strokeWidth="2" /></Svg></Bare>
                  <Bare aria-label="关闭"><Svg $s={14} viewBox="0 0 14 14"><path d="M2 4l9 7M11 4l-9 7" stroke="#fff" strokeWidth="3" /></Svg></Bare>
                </ChildButtons>
              </Canvas>
              <Scroll $w={17}>
                <Arrow $d="up" aria-label="向上" /><Fill $n={108} /><Thumb /><Fill $n={180} /><Arrow $d="down" aria-label="向下" />
              </Scroll>
            </View>
            <Bottom>
              <ModelTab>
                <TabShape viewBox="0 0 58 19"><path d="M4 0l5 18h39l7-18z" fill="#c6c6c6" stroke="#555" /></TabShape>
                <TabText>Model</TabText>
              </ModelTab>
              <Layout>Layout1</Layout>
              <DropTab aria-label="布局列表"><Chevron /></DropTab>
              <HScroll><Arrow $d="left" aria-label="向左" /><Arrow $d="right" aria-label="向右" /></HScroll>
            </Bottom>
          </Work>
        </Main>

        <Command>
          <PanelTitle $end={3}>命令行<Icon n="pin" /></PanelTitle>
          <LogRow>
            <Log aria-label="命令行" readOnly />
            <Scroll $w={17}><Arrow $d="up" aria-label="向上" /><Arrow $d="down" aria-label="向下" /></Scroll>
          </LogRow>
          <Prompt><label htmlFor="cmd">命令行:</label><input id="cmd" /></Prompt>
        </Command>

        <Status>
          <Cell $w={237}>古建牌坊入口.dwg</Cell>
          <Cell $w={98}>4/29</Cell>
          <IconCell aria-label="捕捉"><Icon n="magnet" /></IconCell>
          <IconCell aria-label="栅格"><Icon n="dots" /></IconCell>
          <IconCell aria-label="正交"><Icon n="ortho" /></IconCell>
          <IconCell aria-label="追踪"><Icon n="snap" /></IconCell>
          <Cell $w={251}>(271288.5; -820.9787; 0)</Cell>
          <Cell />
          <SizeCell>29700 x 21000 x 0</SizeCell>
          <Grip viewBox="0 0 11 11"><path d="M8 0h2v2H8zM4 4h2v2H4zM8 4h2v2H8zM0 8h2v2H0zM4 8h2v2H4zM8 8h2v2H8z" fill="#333" /></Grip>
        </Status>

        <Mark viewBox="0 0 166 80" fill="#fff" stroke="#dcdcdc" aria-hidden="true">
          <g fontFamily="Liberation Sans, Noto Sans CJK SC, sans-serif" fontWeight="700" strokeLinejoin="round">
            <text x="1" y="51" fontSize="37">Bai</text>
            <ellipse cx="63" cy="21" rx="6" ry="8" />
            <ellipse cx="74" cy="10" rx="6" ry="8" />
            <ellipse cx="88" cy="11" rx="6" ry="8" />
            <ellipse cx="97" cy="25" rx="6" ry="8" />
            <path d="M80 22c8 0 10 9 15 14s5 15-3 16c-5 0-8-1-12-1s-8 2-12 1c-9-1-9-11-3-17s7-13 15-13z" />
            <text x="67" y="47" fontSize="21">du</text>
            <text x="103" y="50" fontSize="27">经验</text>
            <text x="5" y="73" fontSize="19" fontWeight="400" stroke="#e4e4e4">jingyan.baidu.com</text>
          </g>
        </Mark>
      </Frame>
      <Below />
    </Page>
  );
}
